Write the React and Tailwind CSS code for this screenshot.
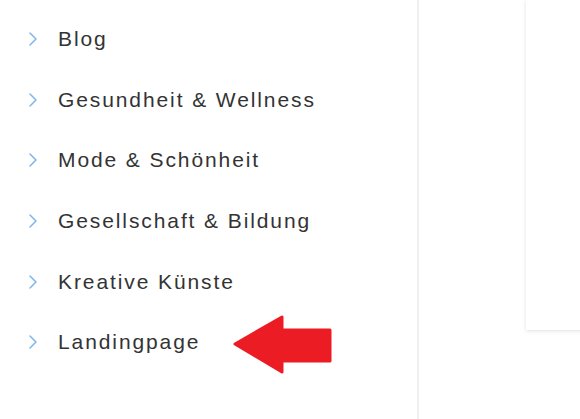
import React from "react";

const categories = [
  "Blog",
  "Gesundheit & Wellness",
  "Mode & Schönheit",
  "Gesellschaft & Bildung",
  "Kreative Künste",
  "Landingpage",
];

function Chevron() {
  return (
    <svg width="10" height="14" viewBox="0 0 10 14" className="shrink-0">
      <path
        d="M2 1 L8 7 L2 13"
        fill="none"
        stroke="#7db6ef"
        strokeWidth="1.5"
        strokeLinecap="round"
        strokeLinejoin="round"
      />
    </svg>
  );
}

function RedArrow() {
  return (
    <svg width="100" height="60" viewBox="0 0 100 60" className="shrink-0">
      <path
        d="M2 29 L49 2 L49 15 L97 15 L97 46 L49 46 L49 57 Z"
        fill="#ec1c24"
        stroke="#ec1c24"
        strokeWidth="3"
        strokeLinejoin="round"
      />
    </svg>
  );
}

export default function App() {
  return (
    <div className="h-[419px] w-[580px] bg-white flex overflow-hidden font-['Liberation_Sans',Arial,sans-serif]">
      {/* Kategorien */}
      <div className="w-[419px] shrink-0 border-r-2 border-[#efefef] pt-[9px]">
        {categories.map((c) => (
          <div key={c} className="h-[60.6px] flex items-center pl-[28px]">
            <Chevron />
            <span className="ml-[20px] text-[21px] leading-[24px] tracking-[1.9px] text-[#333333] whitespace-nowrap">
              {c}
            </span>
            {c === "Landingpage" && (
              <div className="ml-[33px] mt-[5px]">
                <RedArrow />
              </div>
            )}
          </div>
        ))}
      </div>

      {/* Vorschau */}
      <div className="flex-1 pl-[107px]">
        <div className="h-[330px] w-[80px] bg-white shadow-[0_1px_4px_rgba(0,0,0,0.12)]" />
      </div>
    </div>
  );
}
